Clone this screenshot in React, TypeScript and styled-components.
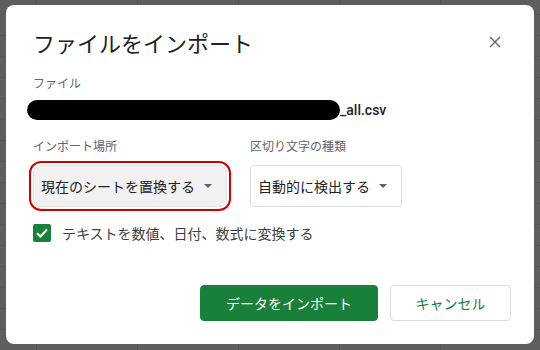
import React from 'react';
import styled, { createGlobalStyle } from 'styled-components';

const GlobalStyle = createGlobalStyle`
  html, body {
    margin: 0;
    padding: 0;
  }
  body {
    width: 540px;
    height: 350px;
    overflow: hidden;
    background-color: #5e5e5e;
    background-image:
      repeating-linear-gradient(90deg, transparent 0 36px, #545454 36px 37px, transparent 37px 101px),
      repeating-linear-gradient(0deg, transparent 0 20px, #565656 20px 21px);
    font-family: Roboto, "Noto Sans CJK JP", sans-serif;
  }
`;

const Caret = () => (
  <svg width="8" height="4" viewBox="0 0 8 4">
    <path d="M0 0h8L4 4z" fill="#5f6368" />
  </svg>
);

const App = () => {
  return (
    <>
      <GlobalStyle />
      <Dialog>
        <Header>
          <Title>ファイルをインポート</Title>
          <Close aria-label="閉じる">
            <svg width="12" height="12" viewBox="0 0 12 12">
              <path d="M1 1l10 10M11 1L1 11" stroke="#5f6368" strokeWidth="1.4" />
            </svg>
          </Close>
        </Header>

        <Label $top={19}>ファイル</Label>
        <FileRow>
          <Redacted />
          <FileName>_all.csv</FileName>
        </FileRow>

        <Columns>
          <Field>
            <Label $top={0}>インポート場所</Label>
            <Select $width={194} $filled $marked>
              <span>現在のシートを置換する</span>
              <Caret />
            </Select>
          </Field>
          <Field>
            <Label $top={0}>区切り文字の種類</Label>
            <Select $width={152}>
              <span>自動的に検出する</span>
              <Caret />
            </Select>
          </Field>
        </Columns>

        <CheckRow>
          <CheckBox>
            <svg width="12" height="10" viewBox="0 0 12 10">
              <path d="M1 5.2l3.4 3.3L11 1.5" stroke="#fff" strokeWidth="2" fill="none" />
            </svg>
          </CheckBox>
          <CheckText>テキストを数値、日付、数式に変換する</CheckText>
        </CheckRow>

        <Footer>
          <Button $primary>データをインポート</Button>
          <Button>キャンセル</Button>
        </Footer>
      </Dialog>
    </>
  );
};

const Dialog = styled.div`
  box-sizing: border-box;
  margin: 5px 0 0 6px;
  width: 528px;
  height: 339px;
  background: #fff;
  border-radius: 8px;
  padding: 23px 23px 23px 27px;
  display: flex;
  flex-direction: column;
`;

const Header = styled.div`
  display: flex;
  align-items: center;
  justify-content: space-between;
  height: 28px;
`;

const Title = styled.h1`
  margin: 0;
  font-size: 22px;
  line-height: 28px;
  font-weight: 400;
  color: #202124;
  font-family: "Noto Sans CJK JP", sans-serif;
`;

const Close = styled.div`
  display: flex;
  align-items: center;
  justify-content: center;
  width: 14px;
  height: 14px;
  margin-right: 9px;
`;

const Label = styled.div<{ $top: number }>`
  margin-top: ${(p) => p.$top}px;
  font-size: 12px;
  line-height: 16px;
  color: #5f6368;
  font-family: "Noto Sans CJK JP", sans-serif;
`;

const FileRow = styled.div`
  display: flex;
  align-items: center;
  height: 20px;
  margin-top: 9px;
`;

const Redacted = styled.div`
  width: 313px;
  height: 20px;
  margin-left: -6px;
  border-radius: 10px;
  background: #000;
`;

const FileName = styled.span`
  font-family: Roboto, sans-serif;
  font-weight: 500;
  font-size: 14px;
  color: #202124;
`;

const Columns = styled.div`
  display: flex;
  gap: 23px;
  margin-top: 18px;
`;

const Field = styled.div`
  display: flex;
  flex-direction: column;
  gap: 11px;
`;

const Select = styled.div<{ $width: number; $filled?: boolean; $marked?: boolean }>`
  box-sizing: border-box;
  width: ${(p) => p.$width}px;
  height: 42px;
  display: flex;
  align-items: center;
  gap: 9px;
  padding-left: 7px;
  border: 1px solid ${(p) => (p.$filled ? '#e3e3e3' : '#dadce0')};
  background: ${(p) => (p.$filled ? '#f1f1f1' : '#fff')};
  font-family: "Noto Sans CJK JP", sans-serif;
  font-size: 14px;
  color: #202124;
  outline: ${(p) => (p.$marked ? '2px solid #d00000' : 'none')};
  outline-offset: 2px;
  border-radius: ${(p) => (p.$marked ? 8 : 4)}px;
`;

const CheckRow = styled.div`
  display: flex;
  align-items: center;
  gap: 11px;
  margin-top: 17px;
  height: 18px;
`;

const CheckBox = styled.div`
  width: 18px;
  height: 18px;
  border-radius: 2px;
  background: #188038;
  display: flex;
  align-items: center;
  justify-content: center;
`;

const CheckText = styled.span`
  font-family: "Noto Sans CJK JP", sans-serif;
  font-size: 14px;
  color: #3c4043;
`;

const Footer = styled.div`
  margin-top: auto;
  display: flex;
  justify-content: flex-end;
  gap: 12px;
`;

const Button = styled.button<{ $primary?: boolean }>`
  box-sizing: border-box;
  height: 36px;
  width: ${(p) => (p.$primary ? 178 : 121)}px;
  border-radius: 4px;
  border: 1px solid ${(p) => (p.$primary ? '#188038' : '#dadce0')};
  background: ${(p) => (p.$primary ? '#188038' : '#fff')};
  color: ${(p) => (p.$primary ? '#fff' : '#188038')};
  font-family: "Noto Sans CJK JP", sans-serif;
  font-size: 14px;
  padding: 0;
`;

export default App;
